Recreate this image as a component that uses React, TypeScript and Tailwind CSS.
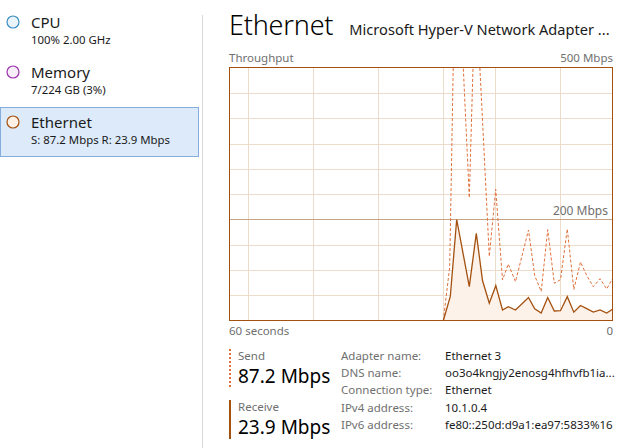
import React from "react";

type Pt = [number, number];

const receive: Pt[] = [
  [214.3, 253.7], [221.3, 229.5], [227.7, 152.5], [240.3, 219.7], [247.3, 166.3],
  [253.5, 213.5], [260.3, 236.3], [266.8, 218.7], [273.5, 243], [279.3, 239.7],
  [286.5, 243], [299.5, 230.5], [305.7, 241.8], [312.2, 246], [318.7, 230.5],
  [325.3, 244], [331.5, 243.7], [338.3, 229.7], [344.8, 245.2], [351.5, 238.5],
  [357.7, 241.7], [364.3, 245], [371, 243], [377.7, 246], [383.5, 242.3],
];

const send: Pt[] = [
  [214.3, 253.7], [220.7, 200], [227, -157], [240.3, 130.7], [246.5, -87],
  [260.3, 189.5], [266.7, 122.3], [273.5, 213], [279.3, 197], [286.5, 214.7],
  [299.5, 163], [305.7, 208.5], [312.2, 224.5], [318.7, 162.7], [325.3, 216.3],
  [331.5, 212.7], [338.3, 162], [344.8, 222.5], [351.5, 195], [357.7, 208.5],
  [364.3, 219.7], [371, 211.7], [377.7, 222], [383.5, 211.5],
];

const hLines = [26.5, 51.5, 77.5, 102.5, 127.5, 178.5, 203.5, 228.5];
const vLines = [19.5, 84.5, 149.5, 214.5, 266.5, 331.5];

const toPath = (pts: Pt[]) => pts.map(([x, y], i) => `${i ? "L" : "M"}${x} ${y}`).join(" ");

function SidebarItem({
  title,
  sub,
  ring,
  fill,
  selected,
}: {
  title: string;
  sub: string;
  ring: string;
  fill: string;
  selected?: boolean;
}) {
  return (
    <div
      className={
        "flex h-[50px] items-start gap-[11px] pl-[5px] border " +
        (selected ? "border-[#84acdc] bg-[#dceafa]" : "border-transparent")
      }
    >
      <svg width="14" height="14" className="mt-[7px] shrink-0">
        <circle cx="7" cy="7" r="6" fill={fill} stroke={ring} strokeWidth="1.2" />
      </svg>
      <div className="pt-[5px]">
        <div className="text-[15px] leading-[19px] text-[#1a1a1a]">{title}</div>
        <div className="text-[11.4px] leading-[16px] text-[#1a1a1a]">{sub}</div>
      </div>
    </div>
  );
}

function Chart() {
  return (
    <div className="relative h-[254px] w-[384px]">
      <svg width="384" height="254" className="block">
        <defs>
          <clipPath id="plot">
            <rect x="0" y="0" width="384" height="254" />
          </clipPath>
        </defs>
        {hLines.map((y) => (
          <line key={y} x1="0" x2="384" y1={y} y2={y} stroke="#ecdccc" strokeWidth="1" />
        ))}
        {vLines.map((x) => (
          <line key={x} x1={x} x2={x} y1="0" y2="254" stroke="#ecdccc" strokeWidth="1" />
        ))}
        <line x1="0" x2="384" y1="152.5" y2="152.5" stroke="#c8a486" strokeWidth="1" />
        <g clipPath="url(#plot)">
          <path d={toPath(receive) + " L383.5 253.7 Z"} fill="#fcf2e9" />
          <path d={toPath(send)} fill="none" stroke="#e0703a" strokeWidth="1" strokeDasharray="3 2" />
          <path d={toPath(receive)} fill="none" stroke="#a4500f" strokeWidth="1.3" />
        </g>
        <rect x="0.5" y="0.5" width="383" height="253" fill="none" stroke="#a4500f" strokeWidth="1" />
      </svg>
      <span className="absolute right-[5px] top-[137px] text-[12px] leading-[14px] text-[#6f6f6f]">200 Mbps</span>
    </div>
  );
}

function Row({ label, value }: { label: string; value: string }) {
  return (
    <div className="flex h-[17.3px] items-center whitespace-nowrap text-[11.5px] leading-[16px]">
      <span className="w-[104px] text-[#6f6f6f]">{label}</span>
      <span className="text-[#1a1a1a]">{value}</span>
    </div>
  );
}

export default function App() {
  return (
    <div
      className="flex h-[448px] w-[623px] overflow-hidden bg-white"
      style={{ fontFamily: '"Noto Sans", "Open Sans", sans-serif' }}
    >
      <div className="flex w-[202px] shrink-0 flex-col pt-[7px] pr-[3px]">
        <SidebarItem title="CPU" sub="100%  2.00 GHz" ring="#3b8dc4" fill="#e9f3fa" />
        <SidebarItem title="Memory" sub="7/224 GB (3%)" ring="#9b2fae" fill="#f7eef9" />
        <SidebarItem
          title="Ethernet"
          sub="S: 87.2 Mbps  R: 23.9 Mbps"
          ring="#a4500f"
          fill="#fdf1e6"
          selected
        />
      </div>
      <div className="mt-[15px] w-px shrink-0 bg-[#d9d9d9]" />
      <div className="flex min-w-0 flex-1 flex-col pl-[26px] pr-[10px]">
        <div className="flex h-[45px] items-end gap-[16px] whitespace-nowrap pb-[2px]">
          <span className="text-[27px] leading-[36px] font-light tracking-[-0.2px] text-black">Ethernet</span>
          <span className="pb-[4px] text-[14.6px] leading-[20px] text-[#1a1a1a]">
            Microsoft Hyper-V Network Adapter ...
          </span>
        </div>
        <div className="mt-[5px] flex h-[17px] items-start justify-between text-[11.5px] leading-[16px] text-[#6f6f6f]">
          <span>Throughput</span>
          <span>500 Mbps</span>
        </div>
        <Chart />
        <div className="flex h-[18px] items-start justify-between pt-[2px] text-[11.5px] leading-[16px] text-[#6f6f6f]">
          <span>60 seconds</span>
          <span>0</span>
        </div>
        <div className="mt-[10px] flex">
          <div className="flex w-[112px] shrink-0 flex-col gap-[12px]">
            <div className="flex gap-[7px]">
              <div className="h-[38px] w-[2px] border-l-2 border-dotted border-[#e0703a]" />
              <div className="-mt-[1px] whitespace-nowrap">
                <div className="text-[11.5px] leading-[16px] text-[#6f6f6f]">Send</div>
                <div className="text-[19px] leading-[24px] text-black">87.2 Mbps</div>
              </div>
            </div>
            <div className="flex gap-[7px]">
              <div className="h-[39px] w-[2px] bg-[#a4500f]" />
              <div className="-mt-[1px] whitespace-nowrap">
                <div className="text-[11.5px] leading-[16px] text-[#6f6f6f]">Receive</div>
                <div className="text-[19px] leading-[24px] text-black">23.9 Mbps</div>
              </div>
            </div>
          </div>
          <div className="-mt-[2px] flex flex-col">
            <Row label="Adapter name:" value="Ethernet 3" />
            <Row label="DNS name:" value="oo3o4kngjy2enosg4hfhvfb1ia..." />
            <Row label="Connection type:" value="Ethernet" />
            <Row label="IPv4 address:" value="10.1.0.4" />
            <Row label="IPv6 address:" value="fe80::250d:d9a1:ea97:5833%16" />
          </div>
        </div>
      </div>
    </div>
  );
}
